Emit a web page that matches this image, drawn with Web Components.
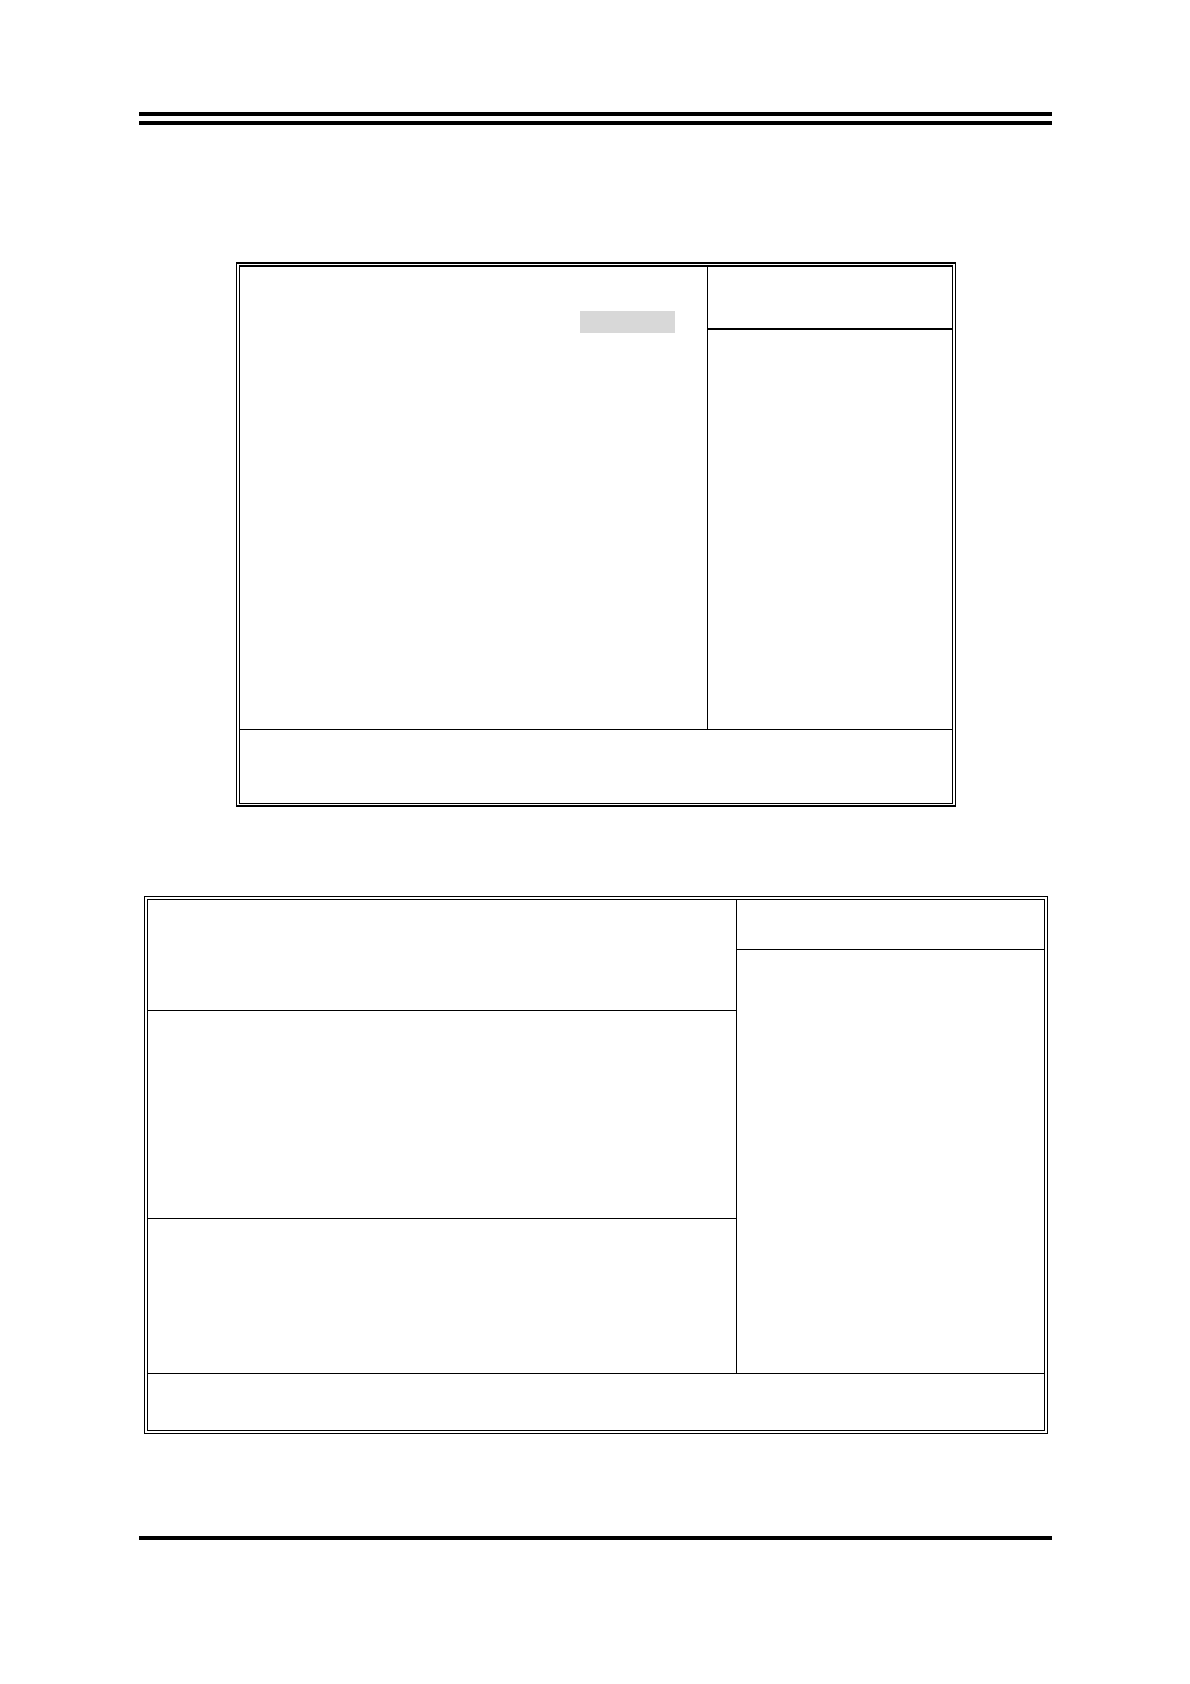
<!DOCTYPE html>
<html lang="en">
<head>
<meta charset="utf-8">
<meta name="viewport" content="width=device-width, initial-scale=1">
<title>Manual page</title>
<style>
  body { margin: 0; background: #fff; color: #000; font-family: "Liberation Sans", sans-serif; }
</style>
</head>
<body>
<manual-page></manual-page>
<script>
  class ElementBase extends HTMLElement {
    constructor() {
      super();
      this.attachShadow({ mode: "open" }).innerHTML = this.constructor.markup;
    }
  }

  // Horizontal bar that closes the header and the footer
  class PageRule extends ElementBase {
    static markup = `
      <style>:host { display: block; height: 4px; background: #000; }</style>`;
  }

  // Box with two nested outlines
  class DoubleFrame extends ElementBase {
    static markup = `
      <style>
        :host { display: block; box-sizing: border-box; border: 1px solid #000; padding: 2px; }
        :host([heavy]) { border-width: 2px 1px; padding: 1px 2px; }
        .inner { border: 1px solid #000; }
        :host([heavy]) .inner { border-top-width: 2px; }
      </style>
      <div class="inner"><slot></slot></div>`;
  }

  // Main column, help column and a legend strip below both
  class SetupLayout extends ElementBase {
    static markup = `
      <style>
        :host { display: block; }
        .columns { display: grid; grid-template-columns: var(--columns); }
        .main { display: flex; flex-direction: column; }
        .help { border-left: 1px solid #000; }
        .legend { border-top: 1px solid #000; }
      </style>
      <div class="columns">
        <main class="main"><slot name="main"></slot></main>
        <aside class="help"><slot name="help"></slot></aside>
      </div>
      <div class="legend"><slot name="legend"></slot></div>`;
  }

  class SelectedField extends ElementBase {
    static markup = `
      <style>:host { display: block; width: 95px; height: 22px; background: #d8d8d8; }</style>`;
  }

  class ManualPage extends ElementBase {
    static markup = `
      <style>
        :host { display: block; padding: 112px 138px 144px 139px; }
        header { display: flex; flex-direction: column; gap: 5px; }
        .first { margin: 137px 96px 0 97px; --columns: minmax(0, 467fr) minmax(0, 245fr); }
        .second { margin: 89px 4px 102px 5px; --columns: minmax(0, 588fr) minmax(0, 308fr); }
        .options { display: flex; justify-content: flex-end; align-items: flex-start;
                   min-height: 462px; box-sizing: border-box; padding: 44px 32px 0 0; }
        .first .title { min-height: 61px; border-bottom: 2px solid #000; }
        .first .keys { min-height: 73px; }
        .second .title { min-height: 49px; border-bottom: 1px solid #000; }
        .second .intro { min-height: 110px; border-bottom: 1px solid #000; }
        .second .values { min-height: 207px; border-bottom: 1px solid #000; }
        .second .notes { min-height: 154px; }
        .second .keys { min-height: 56px; }
      </style>
      <header><page-rule></page-rule><page-rule></page-rule></header>
      <double-frame heavy class="first">
        <setup-layout>
          <div slot="main" class="options"><selected-field></selected-field></div>
          <div slot="help" class="title"></div>
          <div slot="legend" class="keys"></div>
        </setup-layout>
      </double-frame>
      <double-frame class="second">
        <setup-layout>
          <div slot="main" class="intro"></div>
          <div slot="main" class="values"></div>
          <div slot="main" class="notes"></div>
          <div slot="help" class="title"></div>
          <div slot="legend" class="keys"></div>
        </setup-layout>
      </double-frame>
      <footer><page-rule></page-rule></footer>`;
  }

  customElements.define("page-rule", PageRule);
  customElements.define("double-frame", DoubleFrame);
  customElements.define("setup-layout", SetupLayout);
  customElements.define("selected-field", SelectedField);
  customElements.define("manual-page", ManualPage);
</script>
</body>
</html>
